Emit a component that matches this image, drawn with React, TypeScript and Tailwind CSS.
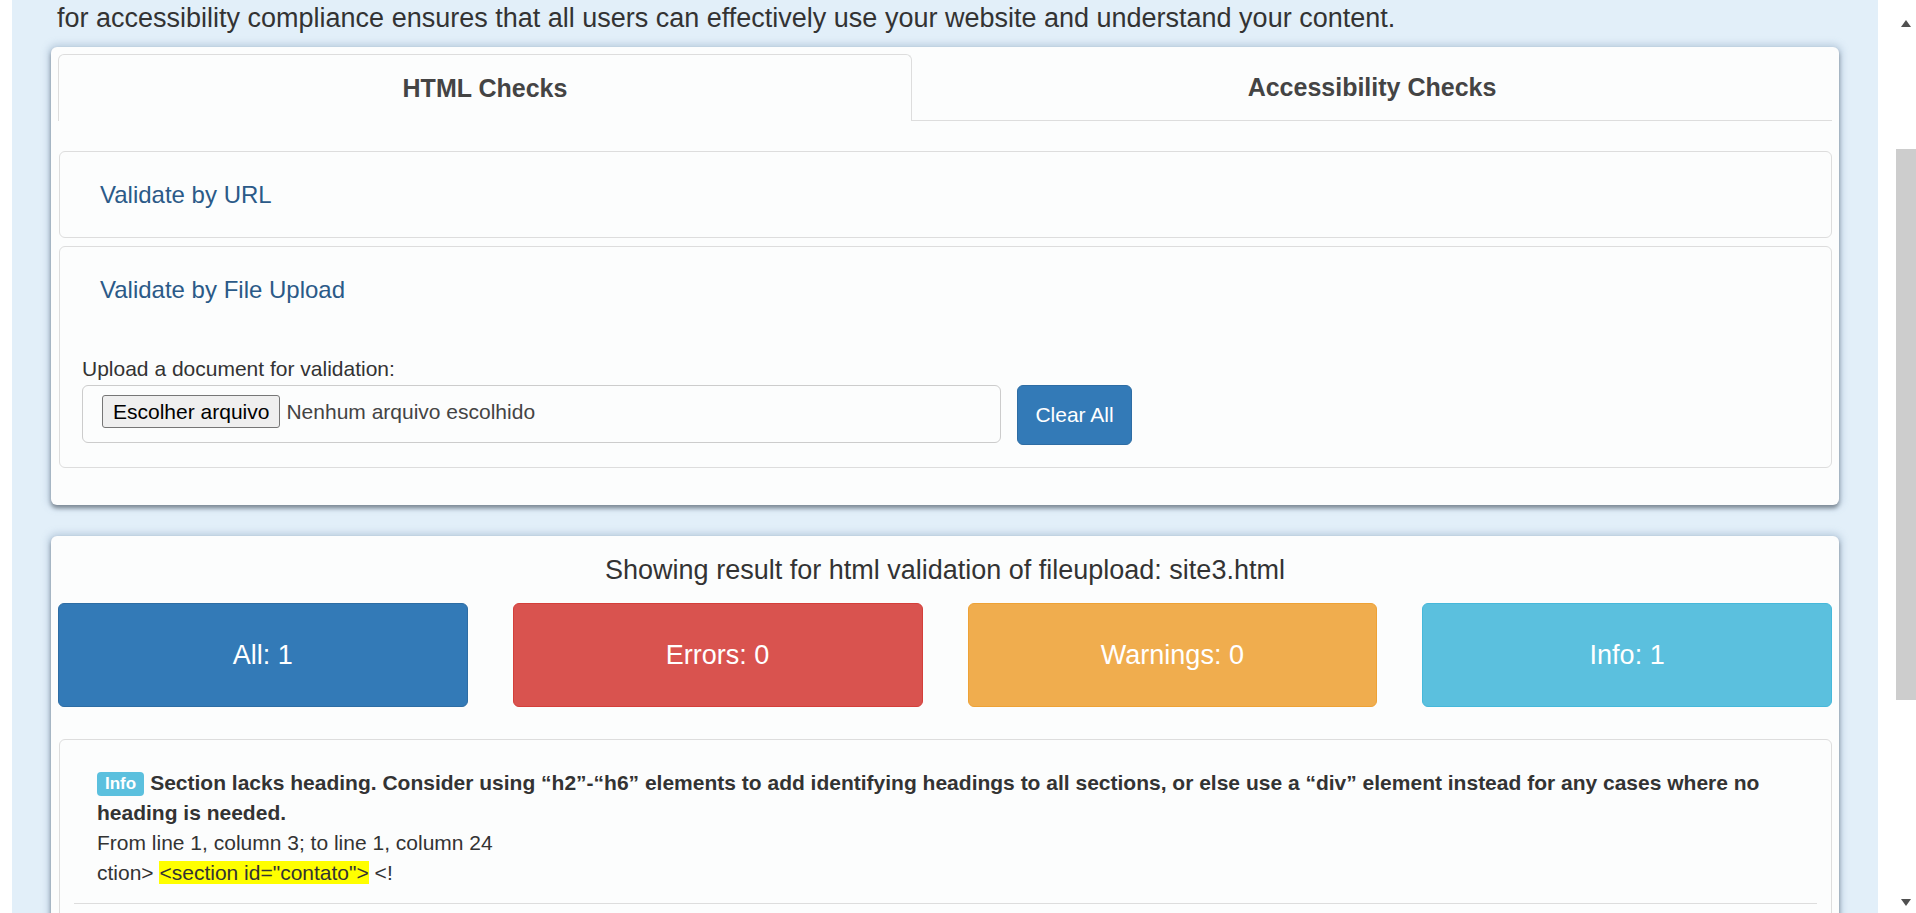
import React from "react";

function CountBox({ label, cls }: { label: string; cls: string }) {
  return (
    <div className={`h-[104px] rounded-[6px] border flex items-center justify-center text-white text-[27px] ${cls}`}>
      {label}
    </div>
  );
}

export default function App() {
  return (
    <div className="w-[1916px] h-[913px] overflow-hidden bg-white flex font-['Liberation_Sans',Arial,sans-serif] text-[#333]">
      <div className="w-[12px] shrink-0" />
      <div className="w-[1866px] shrink-0 bg-[#e2eff9] px-[39px] pt-[1px]">
        <p className="pl-[6px] text-[27px] leading-[34px] whitespace-nowrap">
          for accessibility compliance ensures that all users can effectively use your website and understand your content.
        </p>

        {/* Card 1 */}
        <div className="mt-[12px] bg-[#fcfdfd] rounded-[6px] pt-[7px] px-[7px] pb-[37px] shadow-[0_0_7px_3px_rgba(120,150,180,0.35),0_3px_4px_rgba(0,0,0,0.45)]">
          <div className="flex">
            <div className="w-[854px] h-[67px] border-t border-x border-[#ddd] rounded-t-[6px] flex items-center justify-center text-[25px] font-bold text-[#444] pt-[2px]">
              HTML Checks
            </div>
            <div className="flex-1 h-[67px] border-b border-[#ddd] flex items-center justify-center text-[25px] font-bold text-[#444] pt-[2px]">
              Accessibility Checks
            </div>
          </div>

          <div className="mt-[30px] ml-[1px] h-[87px] border border-[#ddd] rounded-[6px] flex items-center pl-[40px] text-[24px] text-[#2b5a88]">
            Validate by URL
          </div>

          <div className="mt-[8px] ml-[1px] border border-[#ddd] rounded-[6px]">
            <div className="h-[86px] flex items-center pl-[40px] text-[24px] text-[#2b5a88]">
              Validate by File Upload
            </div>
            <div className="pt-[21px] px-[22px] pb-[22px]">
              <div className="text-[21px] leading-[30px]">Upload a document for validation:</div>
              <div className="mt-[1px] flex items-start gap-[16px]">
                <div className="w-[919px] h-[58px] border border-[#ccc] rounded-[6px] flex items-center pl-[19px] pb-[5px]">
                  <span className="h-[33px] px-[10px] bg-[#efefef] border border-[#767676] rounded-[3px] text-black text-[21px] leading-[31px]">
                    Escolher arquivo
                  </span>
                  <span className="ml-[6px] text-[21px] text-[#444]">Nenhum arquivo escolhido</span>
                </div>
                <div className="w-[115px] h-[60px] bg-[#337ab7] border border-[#2e6da4] rounded-[6px] flex items-center justify-center text-white text-[21px]">
                  Clear All
                </div>
              </div>
            </div>
          </div>
        </div>

        {/* Card 2 */}
        <div className="mt-[31px] bg-[#fcfdfd] rounded-[6px] pt-[17px] px-[7px] pb-[30px] shadow-[0_0_7px_3px_rgba(120,150,180,0.35),0_3px_4px_rgba(0,0,0,0.45)]">
          <div className="text-center text-[27px] leading-[34px]">
            Showing result for html validation of fileupload: site3.html
          </div>
          <div className="mt-[16px] grid grid-cols-4 gap-[45px]">
            <CountBox label="All: 1" cls="bg-[#337ab7] border-[#2e6da4]" />
            <CountBox label="Errors: 0" cls="bg-[#d9534f] border-[#d43f3a]" />
            <CountBox label="Warnings: 0" cls="bg-[#f0ad4e] border-[#eea236]" />
            <CountBox label="Info: 1" cls="bg-[#5bc0de] border-[#46b8da]" />
          </div>

          <div className="mt-[32px] ml-[1px] border border-[#ddd] rounded-[6px] px-[14px] pt-[28px] pb-[20px]">
            <div className="pl-[23px] pr-[30px] text-[21px] leading-[30px]">
              <div className="font-bold">
                <span className="inline-block bg-[#5bc0de] text-white text-[17px] leading-[24px] px-[8px] rounded-[4px] mr-[6px] align-[1px]">
                  Info
                </span>
                Section lacks heading. Consider using “h2”-“h6” elements to add identifying headings to all sections, or else use a “div” element instead for any cases where no heading is needed.
              </div>
              <div>From line 1, column 3; to line 1, column 24</div>
              <div>
                ction&gt; <span className="bg-[#ffff00]">&lt;section id="contato"&gt;</span> &lt;!
              </div>
            </div>
            <div className="mt-[15px] border-t border-[#ddd]" />
            <div className="h-[40px]" />
          </div>
        </div>
      </div>
      <div className="w-[17px] shrink-0 bg-white" />
      <div className="w-[21px] shrink-0 bg-white relative">
        <div className="absolute left-[6px] top-[20px] w-0 h-0 border-l-[5px] border-r-[5px] border-b-[7px] border-l-transparent border-r-transparent border-b-[#505050]" />
        <div className="absolute left-[1px] top-[149px] w-[20px] h-[551px] bg-[#cdcdcd]" />
        <div className="absolute left-[6px] top-[899px] w-0 h-0 border-l-[5px] border-r-[5px] border-t-[7px] border-l-transparent border-r-transparent border-t-[#505050]" />
      </div>
    </div>
  );
}
